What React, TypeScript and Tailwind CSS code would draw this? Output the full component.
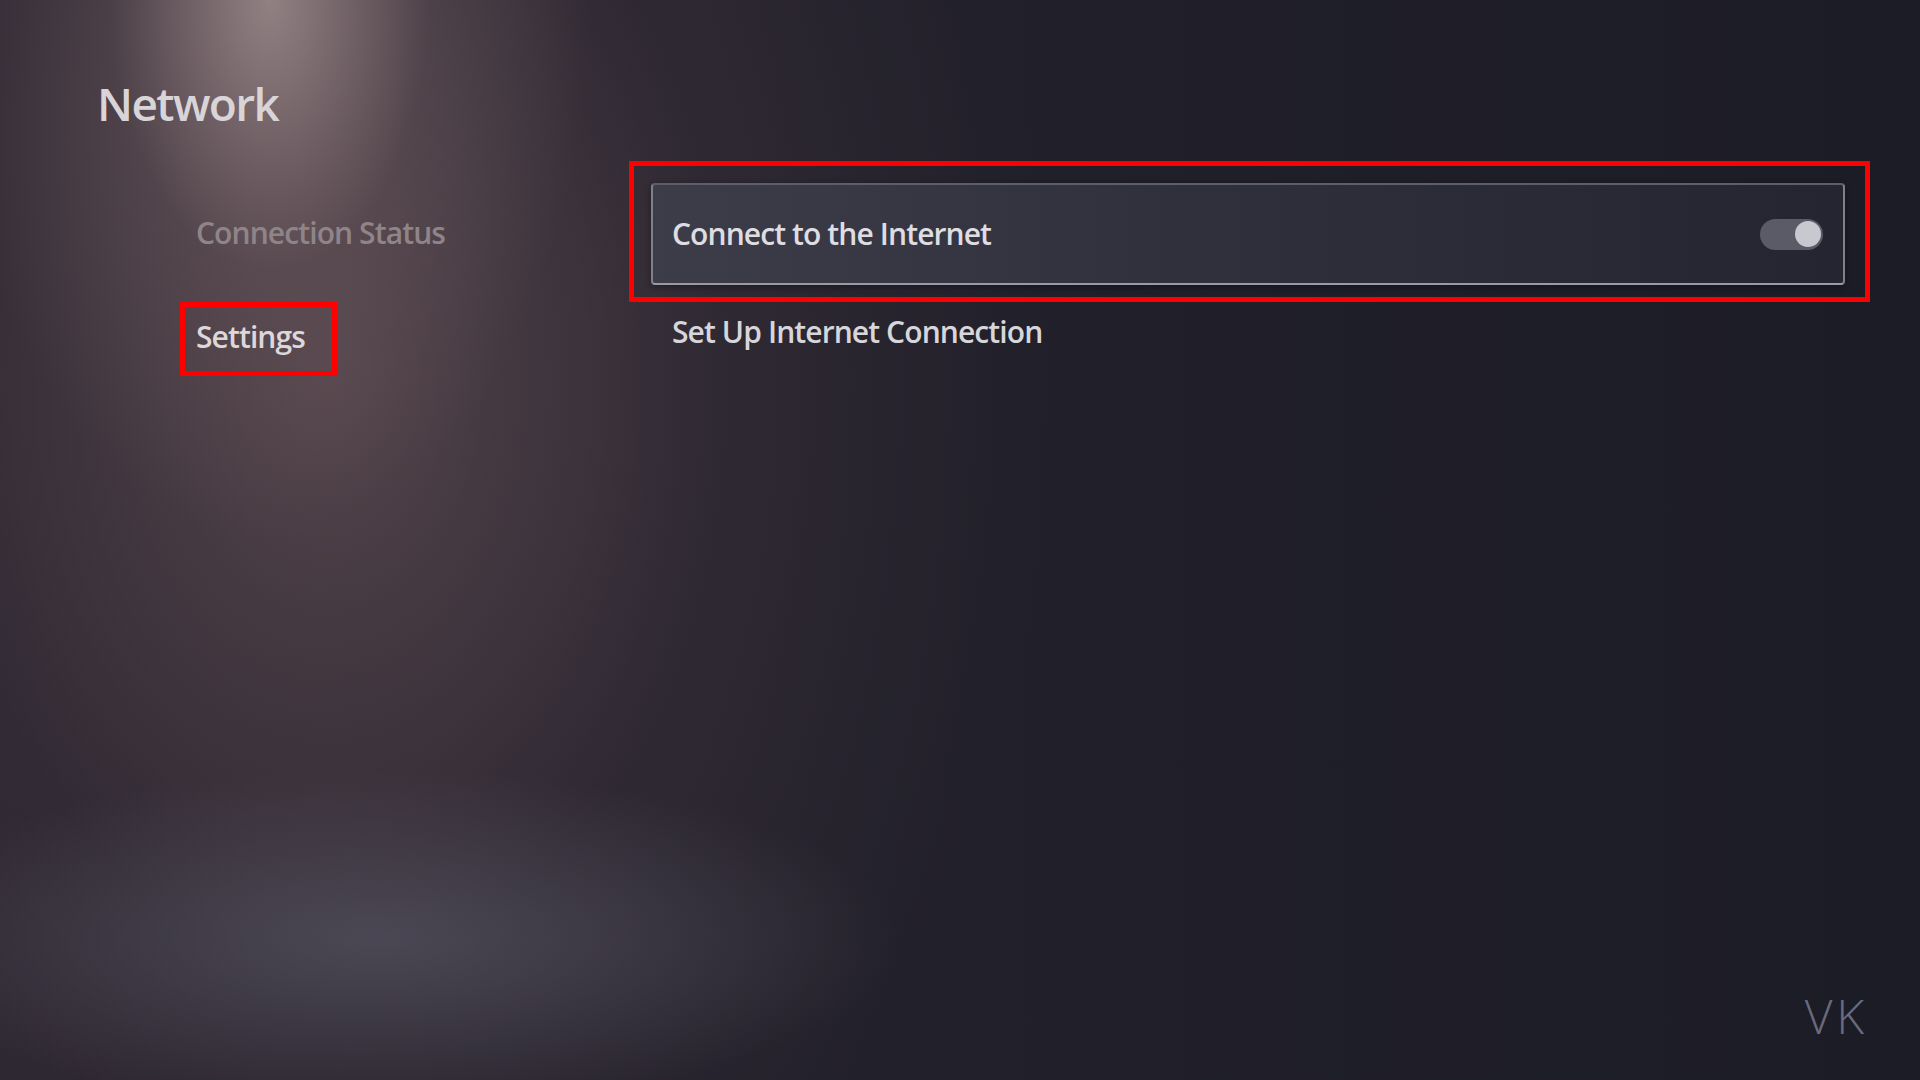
export default function App() {
  return (
    <div
      className="
      relative w-[1920px] h-[1080px] overflow-hidden flex flex-col
      font-['Open_Sans',sans-serif] text-[#dcdadf]
      bg-[radial-gradient(ellipse_320px_540px_at_270px_0px,rgba(175,155,155,0.75),rgba(120,100,105,0.3)_50%,transparent_100%),radial-gradient(ellipse_520px_170px_at_380px_940px,rgba(100,100,116,0.5),transparent_100%),radial-gradient(ellipse_720px_1050px_at_330px_380px,rgba(92,74,80,0.85),rgba(60,50,58,0.45)_55%,transparent_100%),linear-gradient(to_right,#2a2530,#201f2a_55%,#1c1c27)]
    "
    >
      <h1 className="pt-[80px] pl-[97px] text-[46px] leading-none font-semibold tracking-[-0.035em] text-[#d9d4d7]">Network</h1>

      <div className="flex items-start mt-[35px]">
        {/* left menu */}
        <div className="w-[629px] pl-[180px] pt-[57px] flex flex-col">
          <div className="pl-[16px] text-[30px] leading-none font-semibold tracking-[-0.03em] text-[#8f8588]">Connection Status</div>
          <div className="self-start mt-[54px] border-[5px] border-[#ff0000] pl-[11px] pr-[27px] pt-[15px] pb-[19px]">
            <span className="block text-[30px] leading-none font-semibold tracking-[-0.03em] text-[#ddd7da]">Settings</span>
          </div>
        </div>

        {/* right list */}
        <div className="w-[1241px] flex flex-col">
          <div className="border-[5px] border-[#ff0000] pt-[17px] pl-[17px] pr-[20px] pb-[12px]">
            <div
              className="
              h-[102px] flex items-center justify-between pl-[19px] pr-[20px]
              rounded-[4px] border-2 border-[#80808c] border-t-[#5e5e6a] border-b-[#9a9aa6]
              bg-[linear-gradient(to_right,#3d3d4a,#30303d_45%,#252532)]
              shadow-[0_2px_6px_rgba(0,0,0,0.35)]
            "
            >
              <span className="text-[30px] leading-none font-semibold tracking-[-0.03em] text-[#dedde2]">Connect to the Internet</span>
              <div className="w-[63px] h-[31px] rounded-full bg-[#5b5b68] flex items-center justify-end pr-[2px]">
                <div className="w-[26px] h-[26px] rounded-full bg-[#c8c8d0]" />
              </div>
            </div>
          </div>
          <div className="mt-[15px] pl-[43px] text-[30px] leading-none font-semibold tracking-[-0.03em] text-[#d7d6db]">
            Set Up Internet Connection
          </div>
        </div>
      </div>

      <div className="mt-auto self-end pr-[52px] pb-[40px] text-[48px] leading-none font-light tracking-[0.08em] text-[#6b6b79]">VK</div>
    </div>
  )
}
